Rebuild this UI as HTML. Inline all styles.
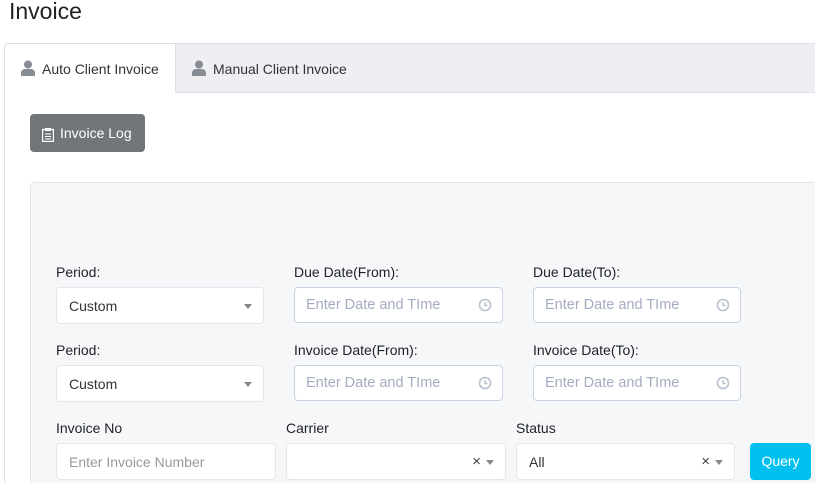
<!DOCTYPE html>
<html><head><meta charset="utf-8"><style>
*{box-sizing:border-box;margin:0;padding:0}
html,body{width:815px;height:483px;overflow:hidden}
body{background:#fff;font-family:"Liberation Sans",sans-serif;color:#212529;position:relative}
.a{position:absolute}
.lbl{position:absolute;font-size:14px;color:#1e2125;font-weight:500}
.sel{position:absolute;background:#fff;border:1px solid #e3e6ea;border-radius:4px;height:37px;font-size:14px;padding:0 12px;line-height:36px;color:#333}
.dt{position:absolute;background:#fff;border:1px solid #c9d2e0;border-radius:4px;height:36px;font-size:14px;padding:0 11px;line-height:34px;color:#a3acc0}
.car{position:absolute;right:11px;top:16px;width:0;height:0;border-left:4.5px solid transparent;border-right:4.5px solid transparent;border-top:5px solid #888}
.clk{position:absolute;right:10px;top:10px}
.x{position:absolute;right:24px;top:0;font-size:15px;color:#444}
</style></head><body>
<div class="a" style="left:9px;top:-2px;font-size:23px;color:#222">Invoice</div>
<div class="a" style="left:4px;top:43px;width:820px;height:450px;border:1px solid #dcdfe4;border-radius:4px 0 0 0"></div>
<div class="a" style="left:175px;top:44px;width:640px;height:49px;background:#eeeef3;border-left:1px solid #dcdfe4;border-bottom:1px solid #dcdfe4"></div>
<svg class="a" style="left:21px;top:60px" width="14" height="16" viewBox="0 0 14 16"><circle cx="7" cy="4.5" r="4" fill="#878c95"/><path d="M0 16v-3c0-2.5 2-4 4-4h6c2 0 4 1.5 4 4v3z" fill="#878c95"/></svg>
<div class="a" style="left:42px;top:61px;font-size:14px;color:#333">Auto Client Invoice</div>
<svg class="a" style="left:192px;top:60px" width="14" height="16" viewBox="0 0 14 16"><circle cx="7" cy="4.5" r="4" fill="#878c95"/><path d="M0 16v-3c0-2.5 2-4 4-4h6c2 0 4 1.5 4 4v3z" fill="#878c95"/></svg>
<div class="a" style="left:213px;top:61px;font-size:14px;color:#333">Manual Client Invoice</div>
<div class="a" style="left:30px;top:114px;width:115px;height:38px;background:#72757a;border-radius:4px"></div>
<svg class="a" style="left:42px;top:128px" width="12" height="14" viewBox="0 0 12 14"><rect x="0.5" y="1.5" width="11" height="12" fill="none" stroke="#fff" stroke-width="1.4"/><rect x="3" y="0" width="6" height="3" fill="#fff"/><path d="M3 6h6M3 8.5h6M3 11h6" stroke="#fff" stroke-width="1"/></svg>
<div class="a" style="left:60px;top:125px;font-size:14px;color:#fff">Invoice Log</div>
<div class="a" style="left:30px;top:182px;width:800px;height:310px;background:#f6f7f9;border:1px solid #e1e4e8;border-radius:5px"></div>

<div class="lbl" style="left:56px;top:264px">Period:</div>
<div class="lbl" style="left:294px;top:264px">Due Date(From):</div>
<div class="lbl" style="left:533px;top:264px">Due Date(To):</div>
<div class="sel" style="left:56px;top:287px;width:208px">Custom<span class="car"></span></div>
<div class="dt" style="left:294px;top:287px;width:209px;font-size:14.5px">Enter Date and TIme<svg class="clk" width="14" height="14"><circle cx="7" cy="7" r="5.5" fill="none" stroke="#b8c0cf" stroke-width="1.6"/><path d="M7 4v3.5h2.5" fill="none" stroke="#b8c0cf" stroke-width="1.4"/></svg></div>
<div class="dt" style="left:533px;top:287px;width:208px;font-size:14.5px">Enter Date and TIme<svg class="clk" width="14" height="14"><circle cx="7" cy="7" r="5.5" fill="none" stroke="#b8c0cf" stroke-width="1.6"/><path d="M7 4v3.5h2.5" fill="none" stroke="#b8c0cf" stroke-width="1.4"/></svg></div>

<div class="lbl" style="left:56px;top:342px">Period:</div>
<div class="lbl" style="left:294px;top:342px">Invoice Date(From):</div>
<div class="lbl" style="left:533px;top:342px">Invoice Date(To):</div>
<div class="sel" style="left:56px;top:365px;width:208px">Custom<span class="car"></span></div>
<div class="dt" style="left:294px;top:365px;width:209px;font-size:14.5px">Enter Date and TIme<svg class="clk" width="14" height="14"><circle cx="7" cy="7" r="5.5" fill="none" stroke="#b8c0cf" stroke-width="1.6"/><path d="M7 4v3.5h2.5" fill="none" stroke="#b8c0cf" stroke-width="1.4"/></svg></div>
<div class="dt" style="left:533px;top:365px;width:208px;font-size:14.5px">Enter Date and TIme<svg class="clk" width="14" height="14"><circle cx="7" cy="7" r="5.5" fill="none" stroke="#b8c0cf" stroke-width="1.6"/><path d="M7 4v3.5h2.5" fill="none" stroke="#b8c0cf" stroke-width="1.4"/></svg></div>

<div class="lbl" style="left:56px;top:420px">Invoice No</div>
<div class="lbl" style="left:286px;top:420px">Carrier</div>
<div class="lbl" style="left:516px;top:420px">Status</div>
<div class="sel" style="left:56px;top:443px;width:220px;color:#999;font-size:14px">Enter Invoice Number</div>
<div class="sel" style="left:286px;top:443px;width:220px"><span class="x">×</span><span class="car"></span></div>
<div class="sel" style="left:516px;top:443px;width:219px">All<span class="x">×</span><span class="car"></span></div>
<div class="a" style="left:750px;top:443px;width:61px;height:37px;background:#00c0ef;border-radius:4px;color:#fff;font-size:14px;text-align:center;line-height:37px">Query</div>
</body></html>
